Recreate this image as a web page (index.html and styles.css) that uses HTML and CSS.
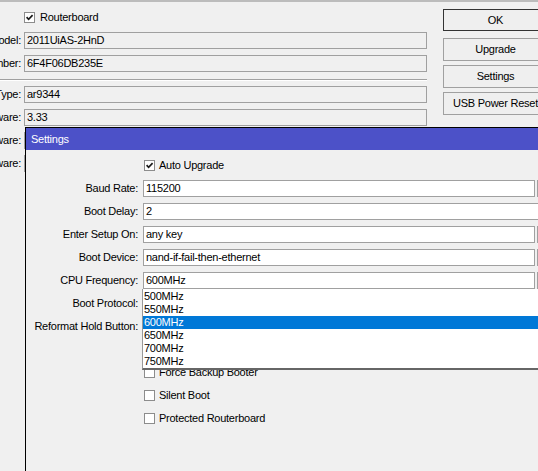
FILE: index.html
```html
<!DOCTYPE html>
<html>
<head>
<meta charset="utf-8">
<link rel="stylesheet" href="styles.css">
</head>
<body>
<div class="main">
  <div class="form">
    <div class="check-row">
      <span class="lab"></span>
      <span class="cb"><svg viewBox="0 0 9 9" width="9" height="9"><path d="M1.6 4.2 L3.6 6.3 L7.6 2.1" fill="none" stroke="#1a1a1a" stroke-width="1.7"/></svg></span>
      <span class="cb-text">Routerboard</span>
    </div>
    <div class="row"><span class="lab"><span>Model:</span></span><div class="field ro">2011UiAS-2HnD</div></div>
    <div class="row"><span class="lab"><span>Serial Number:</span></span><div class="field ro">6F4F06DB235E</div></div>
    <div class="sep"></div>
    <div class="row"><span class="lab"><span>Firmware Type:</span></span><div class="field ro">ar9344</div></div>
    <div class="row"><span class="lab"><span>Factory Firmware:</span></span><div class="field ro">3.33</div></div>
    <div class="row"><span class="lab"><span>Current Firmware:</span></span><div class="field ro"></div></div>
    <div class="row"><span class="lab"><span>Upgrade Firmware:</span></span><div class="field ro"></div></div>
  </div>
  <div class="buttons">
    <div class="btn btn-default">OK</div>
    <div class="btn btn-first">Upgrade</div>
    <div class="btn">Settings</div>
    <div class="btn">USB Power Reset</div>
  </div>
</div>

<div class="win">
  <div class="title">Settings</div>
  <div class="win-body">
    <div class="wrow">
      <span class="wlab"></span>
      <span class="cb cb-w"><svg viewBox="0 0 9 9" width="9" height="9"><path d="M1.6 4.2 L3.6 6.3 L7.6 2.1" fill="none" stroke="#1a1a1a" stroke-width="1.7"/></svg></span>
      <span class="cb-text cb-text-w">Auto Upgrade</span>
    </div>
    <div class="wrow"><span class="wlab">Baud Rate:</span><div class="fwrap"><div class="field">115200</div><div class="dd"></div></div></div>
    <div class="wrow"><span class="wlab">Boot Delay:</span><div class="fwrap"><div class="field">2</div></div></div>
    <div class="wrow"><span class="wlab">Enter Setup On:</span><div class="fwrap"><div class="field">any key</div><div class="dd"></div></div></div>
    <div class="wrow"><span class="wlab">Boot Device:</span><div class="fwrap"><div class="field">nand-if-fail-then-ethernet</div><div class="dd"></div></div></div>
    <div class="wrow"><span class="wlab">CPU Frequency:</span><div class="fwrap anchor"><div class="field">600MHz</div><div class="dd"></div>
      <div class="list">
        <div class="item">500MHz</div>
        <div class="item">550MHz</div>
        <div class="item sel">600MHz</div>
        <div class="item">650MHz</div>
        <div class="item">700MHz</div>
        <div class="item">750MHz</div>
      </div>
    </div></div>
    <div class="wrow"><span class="wlab">Boot Protocol:</span><div class="fwrap"><div class="field"></div><div class="dd"></div></div></div>
    <div class="wrow"><span class="wlab">Reformat Hold Button:</span><div class="fwrap"><div class="field"></div><div class="dd"></div></div></div>
    <div class="wrow"></div>
    <div class="wrow"><span class="wlab"></span><span class="cb cb-w"></span><span class="cb-text cb-text-w">Force Backup Booter</span></div>
    <div class="wrow"><span class="wlab"></span><span class="cb cb-w"></span><span class="cb-text cb-text-w">Silent Boot</span></div>
    <div class="wrow"><span class="wlab"></span><span class="cb cb-w"></span><span class="cb-text cb-text-w">Protected Routerboard</span></div>
  </div>
</div>
</body>
</html>
```
FILE: styles.css
```css
html, body {
  margin: 0;
  padding: 0;
  width: 538px;
  height: 471px;
  overflow: hidden;
}
body {
  position: relative;
  background: #f0f0f0;
  border-top: 2px solid #bcbcbc;
  box-sizing: border-box;
  font-family: "Liberation Sans", Arial, sans-serif;
  font-size: 11px;
  letter-spacing: -0.25px;
  color: #000;
}
.main {
  display: flex;
  gap: 16px;
}
.form {
  width: 427px;
  flex: none;
  display: flex;
  flex-direction: column;
  padding-top: 10px;
}
.check-row {
  display: flex;
  align-items: center;
  height: 11px;
  margin-bottom: 9px;
}
.lab {
  width: 21px;
  flex: none;
  margin-right: 3px;
  display: flex;
  justify-content: flex-end;
  white-space: nowrap;
  line-height: 17px;
}
.cb {
  width: 11px;
  height: 11px;
  box-sizing: border-box;
  border: 1px solid #8c8c8c;
  background: #fff;
  flex: none;
  display: flex;
  align-items: center;
  justify-content: center;
}
.cb svg { display: block; }
.cb-text {
  margin-left: 5px;
  white-space: nowrap;
  line-height: 13px;
}
.row {
  display: flex;
  height: 17px;
  margin-bottom: 6px;
}
.field {
  flex: 1;
  height: 17px;
  box-sizing: border-box;
  border: 1px solid #a0a0a0;
  background: #fff;
  padding-left: 2px;
  line-height: 15px;
  white-space: nowrap;
  overflow: hidden;
}
.field.ro {
  background: #f0f0f0;
}
.sep {
  margin-top: 1px;
  margin-bottom: 5px;
  height: 1px;
  border-top: 1px solid #a0a0a0;
  background: #fff;
}
.buttons {
  width: 105px;
  flex: none;
  display: flex;
  flex-direction: column;
  padding-top: 7px;
}
.btn {
  height: 23px;
  box-sizing: border-box;
  border: 1px solid #a0a0a0;
  background: #efefef;
  text-align: center;
  line-height: 21px;
  white-space: nowrap;
  margin-top: 4px;
}
.btn-default {
  height: 22px;
  line-height: 20px;
  border-color: #333;
  margin-top: 0;
}
.btn-first {
  margin-top: 7px;
}
.win {
  position: absolute;
  left: 25px;
  top: 125px;
  width: 580px;
  height: 420px;
  box-sizing: border-box;
  border-top: 1px solid #000;
  border-left: 1px solid #000;
  background: #f0f0f0;
}
.title {
  height: 22px;
  background: #4c51c8;
  color: #fff;
  padding-left: 5px;
  line-height: 22px;
}
.win-body {
  display: flex;
  flex-direction: column;
  gap: 6px;
  padding-top: 7px;
}
.wrow {
  display: flex;
  align-items: center;
  height: 17px;
}
.wlab {
  width: 112px;
  flex: none;
  margin-right: 5px;
  text-align: right;
  white-space: nowrap;
  line-height: 17px;
}
.cb-w {
  margin-left: 1px;
}
.cb-text-w {
  margin-left: 4px;
}
.fwrap {
  width: 410px;
  flex: none;
  display: flex;
  gap: 2px;
  height: 17px;
}
.anchor {
  position: relative;
}
.dd {
  width: 16px;
  flex: none;
  height: 17px;
  box-sizing: border-box;
  border: 1px solid #a0a0a0;
  background: #f0f0f0;
}
.list {
  position: absolute;
  left: -1px;
  top: 17px;
  width: 412px;
  z-index: 5;
  background: #fff;
  border-left: 1px solid #999;
  border-bottom: 2px solid #666;
  padding-top: 1px;
}
.item {
  height: 13px;
  line-height: 13px;
  padding-left: 1px;
  white-space: nowrap;
}
.item.sel {
  background: #0078d7;
  color: #fff;
}
```
